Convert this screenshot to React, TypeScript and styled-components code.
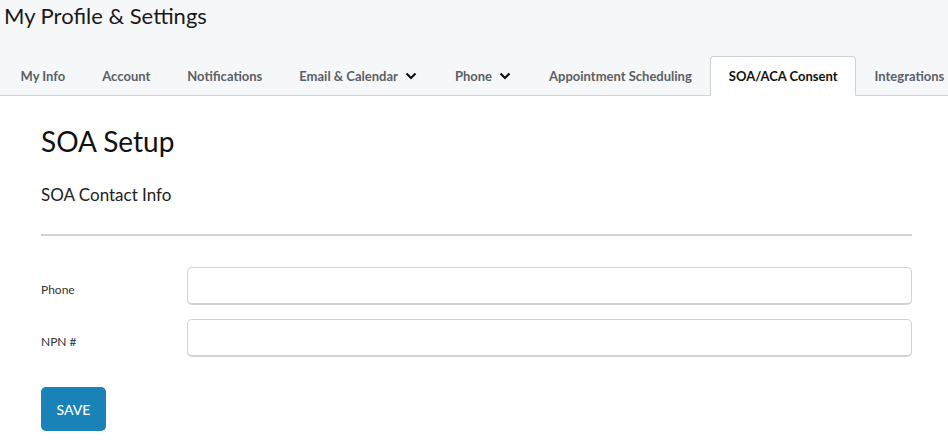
import styled, { createGlobalStyle } from "styled-components";

const GlobalStyle = createGlobalStyle`
  html, body {
    margin: 0;
    padding: 0;
    background: #ffffff;
    font-family: "Lato", "Noto Sans", sans-serif;
    color: #212529;
  }
  * { box-sizing: border-box; }
`;

const Header = styled.header`
  background: #f6f7f9;
  border-bottom: 1px solid #cfd1d4;
  height: 96px;
  display: flex;
  flex-direction: column;
  justify-content: space-between;
`;

const PageTitle = styled.h1`
  margin: 0;
  padding: 3px 0 0 4px;
  font-size: 22px;
  font-weight: 400;
  line-height: 26px;
  color: #1a1a1a;
`;

const TabBar = styled.nav`
  display: flex;
  align-items: flex-end;
  padding-left: 2px;
  margin-bottom: -1px;
`;

const Tab = styled.div<{ $active?: boolean }>`
  display: flex;
  align-items: center;
  gap: 7px;
  height: 40px;
  padding: 0 17.5px;
  font-size: 13px;
  font-weight: 700;
  white-space: nowrap;
  color: ${(p) => (p.$active ? "#111" : "#5b5f66")};
  background: ${(p) => (p.$active ? "#fff" : "transparent")};
  border: 1px solid ${(p) => (p.$active ? "#cfd1d4" : "transparent")};
  border-bottom-color: ${(p) => (p.$active ? "#fff" : "transparent")};
  border-radius: 4px 4px 0 0;
`;

const Chevron = () => (
  <svg width="13" height="8" viewBox="0 0 13 8">
    <path d="M1.5 1.5 L6 6 L10.5 1.5" fill="none" stroke="#111" strokeWidth="2.2" />
  </svg>
);

const Content = styled.main`
  padding: 28px 36px 0 41px;
`;

const SectionTitle = styled.h2`
  margin: 0;
  font-size: 28px;
  font-weight: 400;
  line-height: 34px;
  color: #111;
`;

const SubTitle = styled.h3`
  margin: 26px 0 0;
  font-size: 17px;
  font-weight: 400;
  line-height: 22px;
  color: #222;
`;

const Divider = styled.hr`
  margin: 28px 0 31px;
  border: 0;
  border-top: 2px solid #cfd1d4;
`;

const Form = styled.form`
  display: flex;
  flex-direction: column;
  gap: 14px;
`;

const Row = styled.label`
  display: grid;
  grid-template-columns: 146px 1fr;
  align-items: center;
`;

const LabelText = styled.span`
  padding-top: 6px;
  font-size: 12px;
  color: #333;
`;

const Input = styled.input`
  height: 38px;
  border: 1px solid #d2d2d2;
  border-bottom-width: 2px;
  border-radius: 5px;
  background: #fff;
  font-size: 13px;
  padding: 0 10px;
  font-family: inherit;
`;

const SaveButton = styled.button`
  margin-top: 16px;
  align-self: flex-start;
  width: 65px;
  height: 44px;
  border: 0;
  border-radius: 5px;
  background: #1982b7;
  color: #fff;
  font-family: inherit;
  font-size: 14px;
  font-weight: 500;
`;

const tabs: { label: string; menu?: boolean; active?: boolean }[] = [
  { label: "My Info" },
  { label: "Account" },
  { label: "Notifications" },
  { label: "Email & Calendar", menu: true },
  { label: "Phone", menu: true },
  { label: "Appointment Scheduling" },
  { label: "SOA/ACA Consent", active: true },
  { label: "Integrations" },
];

export default function App() {
  return (
    <>
      <GlobalStyle />
      <Header>
        <PageTitle>My Profile &amp; Settings</PageTitle>
        <TabBar>
          {tabs.map((t) => (
            <Tab key={t.label} $active={t.active}>
              {t.label}
              {t.menu && <Chevron />}
            </Tab>
          ))}
        </TabBar>
      </Header>
      <Content>
        <SectionTitle>SOA Setup</SectionTitle>
        <SubTitle>SOA Contact Info</SubTitle>
        <Divider />
        <Form onSubmit={(e) => e.preventDefault()}>
          <Row>
            <LabelText>Phone</LabelText>
            <Input type="text" />
          </Row>
          <Row>
            <LabelText>NPN #</LabelText>
            <Input type="text" />
          </Row>
          <SaveButton type="submit">SAVE</SaveButton>
        </Form>
      </Content>
    </>
  );
}
